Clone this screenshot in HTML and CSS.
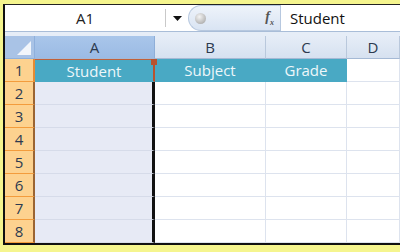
FILE: index.html
```html
<!DOCTYPE html>
<html lang="en">

<head>
    <meta charset="UTF-8">
    <meta name="viewport" content="width=device-width, initial-scale=1.0">
    <title>Sheet</title>
    <link rel="stylesheet" href="styles.css">
</head>

<body>

    <div id="frame">
        <div class="fbar">
            <div class="namebox">A1</div>
            <div class="drop">
                <svg width="9" height="5" viewBox="0 0 9 5"><path d="M0 0h9L4.5 5z" fill="#111"/></svg>
            </div>
            <div class="pill">
                <span class="knob"></span>
                <span class="fx">f<sub>x</sub></span>
            </div>
            <div class="finput">Student</div>
        </div>
        <div class="strip"></div>

        <div class="sheet">
            <div class="corner">
                <svg width="14" height="14" viewBox="0 0 14 14"><path d="M14 0V14H0z" fill="#f2f6fb"/></svg>
            </div>
            <div class="colh sel">A</div>
            <div class="colh">B</div>
            <div class="colh">C</div>
            <div class="colh">D</div>

            <div class="rowh on">1</div>
            <div class="cell head first">Student<span class="handle"></span></div>
            <div class="cell head">Subject</div>
            <div class="cell head">Grade</div>
            <div class="cell"></div>

            <div class="rowh">2</div><div class="cell pick"></div><div class="cell"></div><div class="cell"></div><div class="cell"></div>
            <div class="rowh">3</div><div class="cell pick"></div><div class="cell"></div><div class="cell"></div><div class="cell"></div>
            <div class="rowh">4</div><div class="cell pick"></div><div class="cell"></div><div class="cell"></div><div class="cell"></div>
            <div class="rowh">5</div><div class="cell pick"></div><div class="cell"></div><div class="cell"></div><div class="cell"></div>
            <div class="rowh">6</div><div class="cell pick"></div><div class="cell"></div><div class="cell"></div><div class="cell"></div>
            <div class="rowh">7</div><div class="cell pick"></div><div class="cell"></div><div class="cell"></div><div class="cell"></div>
            <div class="rowh">8</div><div class="cell pick"></div><div class="cell"></div><div class="cell"></div><div class="cell"></div>
        </div>
    </div>

</body>

</html>
```

FILE: styles.css
```css
body{
    margin: 0;
    padding: 4px 0 0 3px;
    height: 252px;
    box-sizing: border-box;
    background-color: #f5f58e;
    font-family: "Open Sans", sans-serif;
    overflow: hidden;
}

#frame{
    border-top: 1px solid #222;
    border-left: 2px solid #111;
    border-bottom: 2px solid #111;
    background-color: #fff;
}

.fbar{
    display: flex;
    height: 26px;
    background-color: #fff;
}

.namebox{
    width: 160px;
    display: flex;
    align-items: center;
    justify-content: center;
    font-size: 15px;
    color: #222;
    border-right: 1px solid #c9c9c9;
    margin: 4px 0;
}

.drop{
    width: 22px;
    display: flex;
    align-items: center;
    justify-content: center;
}

.pill{
    width: 92px;
    display: flex;
    align-items: center;
    justify-content: space-between;
    padding: 0 6px 0 6px;
    box-sizing: border-box;
    border-radius: 13px 0 0 13px;
    background: linear-gradient(#eef3fa, #d9e4f3);
    border: 1px solid #b7c8df;
    border-right: none;
}

.knob{
    width: 11px;
    height: 11px;
    border-radius: 50%;
    background: radial-gradient(circle at 40% 35%, #f4f4f4, #9c9c9c);
}

.fx{
    font-family: "Liberation Serif", serif;
    font-style: italic;
    font-weight: bold;
    font-size: 14px;
    color: #555;
}

.fx sub{
    font-size: 8px;
}

.finput{
    flex: 1;
    display: flex;
    align-items: center;
    padding-left: 9px;
    font-size: 15px;
    color: #111;
    border-left: 1px solid #b7c8df;
}

.strip{
    height: 5px;
    border-top: 1px solid #a9bdd8;
    background-color: #e6edf7;
    box-sizing: border-box;
}

.sheet{
    display: grid;
    grid-template-columns: 30px 120px 111px 81px 1fr;
    grid-template-rows: 23px repeat(8, 23px);
}

.corner{
    background-color: #a9c3e6;
    border-right: 1px solid #8fb0dc;
    border-bottom: 1px solid #8fb0dc;
    display: flex;
    align-items: flex-end;
    justify-content: flex-end;
    padding: 0 3px 3px 0;
}

.colh{
    background: linear-gradient(#e6edf7, #d6e1f0);
    border-right: 1px solid #b9c8dc;
    border-bottom: 1px solid #a5b9d5;
    display: flex;
    align-items: center;
    justify-content: center;
    font-size: 15px;
    color: #2c3a4f;
}

.colh.sel{
    background: linear-gradient(#a9c6ea, #9bbbe4);
    border-right-color: #8eaed8;
}

.rowh{
    background-color: #fdd28f;
    border-right: 2px solid #9b6432;
    border-bottom: 1px solid #f39c3c;
    display: flex;
    align-items: center;
    justify-content: center;
    font-size: 15px;
    color: #2c3a4f;
}

.rowh.on{
    border-right-color: #e48b34;
}

.cell{
    border-right: 1px solid #dde3ee;
    border-bottom: 1px solid #dde3ee;
    display: flex;
    align-items: center;
    justify-content: center;
    font-size: 15px;
}

.cell.head{
    background-color: #49a9c4;
    color: #eef7fa;
    border-color: #49a9c4;
}

.cell.first{
    position: relative;
    border-top: 1px solid #c1603a;
    border-right: 2px solid #b8522e;
}

.handle{
    position: absolute;
    right: -4px;
    top: -1px;
    width: 6px;
    height: 6px;
    background-color: #b8522e;
}

.cell.pick{
    background-color: #e7eaf5;
    border-right: 3px solid #111;
    border-bottom-color: #d6dbe9;
}
```
